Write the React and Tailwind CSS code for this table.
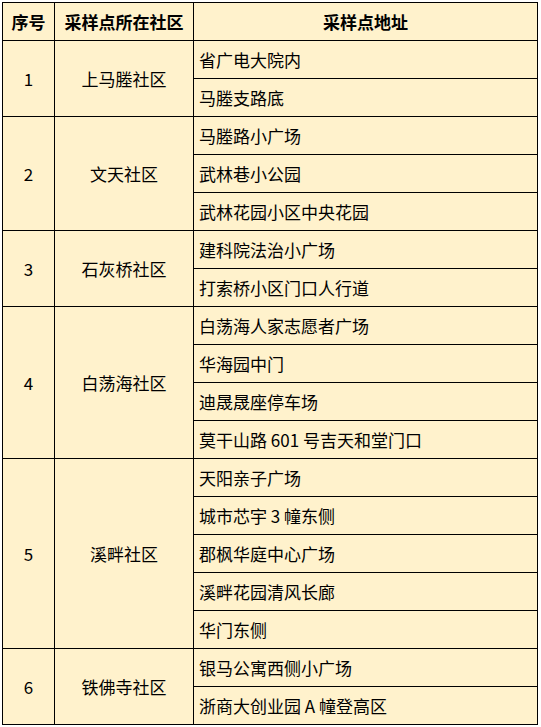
import React from "react";

const groups = [
  { no: "1", name: "上马塍社区", items: ["省广电大院内", "马塍支路底"], span: "row-span-2" },
  { no: "2", name: "文天社区", items: ["马塍路小广场", "武林巷小公园", "武林花园小区中央花园"], span: "row-span-3" },
  { no: "3", name: "石灰桥社区", items: ["建科院法治小广场", "打索桥小区门口人行道"], span: "row-span-2" },
  { no: "4", name: "白荡海社区", items: ["白荡海人家志愿者广场", "华海园中门", "迪晟晟座停车场", "莫干山路 601 号吉天和堂门口"], span: "row-span-4" },
  { no: "5", name: "溪畔社区", items: ["天阳亲子广场", "城市芯宇 3 幢东侧", "郡枫华庭中心广场", "溪畔花园清风长廊", "华门东侧"], span: "row-span-5" },
  { no: "6", name: "铁佛寺社区", items: ["银马公寓西侧小广场", "浙商大创业园 A 幢登高区"], span: "row-span-2" },
];

export default function App() {
  return (
    <div className="bg-white w-[541px] h-[727px] pt-[2px] pl-[2px]" style={{ fontFamily: '"Microsoft YaHei", "Noto Sans CJK SC", "Noto Sans", sans-serif' }}>
      <div className="grid w-[536px] grid-cols-[51px_138px_343px] grid-rows-[repeat(19,37px)] gap-px bg-black p-px text-[17px] text-black">
        <div className="bg-[#fff2cc] flex items-center justify-center font-bold">序号</div>
        <div className="bg-[#fff2cc] flex items-center justify-center font-bold">采样点所在社区</div>
        <div className="bg-[#fff2cc] flex items-center justify-center font-bold">采样点地址</div>
        {groups.map((g) => (
          <React.Fragment key={g.no}>
            <div className={`${g.span} col-start-1 bg-[#fff2cc] flex items-center justify-center`}>{g.no}</div>
            <div className={`${g.span} col-start-2 bg-[#fff2cc] flex items-center justify-center`}>{g.name}</div>
            {g.items.map((it, i) => (
              <div key={i} className="col-start-3 bg-[#fff2cc] flex items-center pl-[5px]">{it}</div>
            ))}
          </React.Fragment>
        ))}
      </div>
    </div>
  );
}
